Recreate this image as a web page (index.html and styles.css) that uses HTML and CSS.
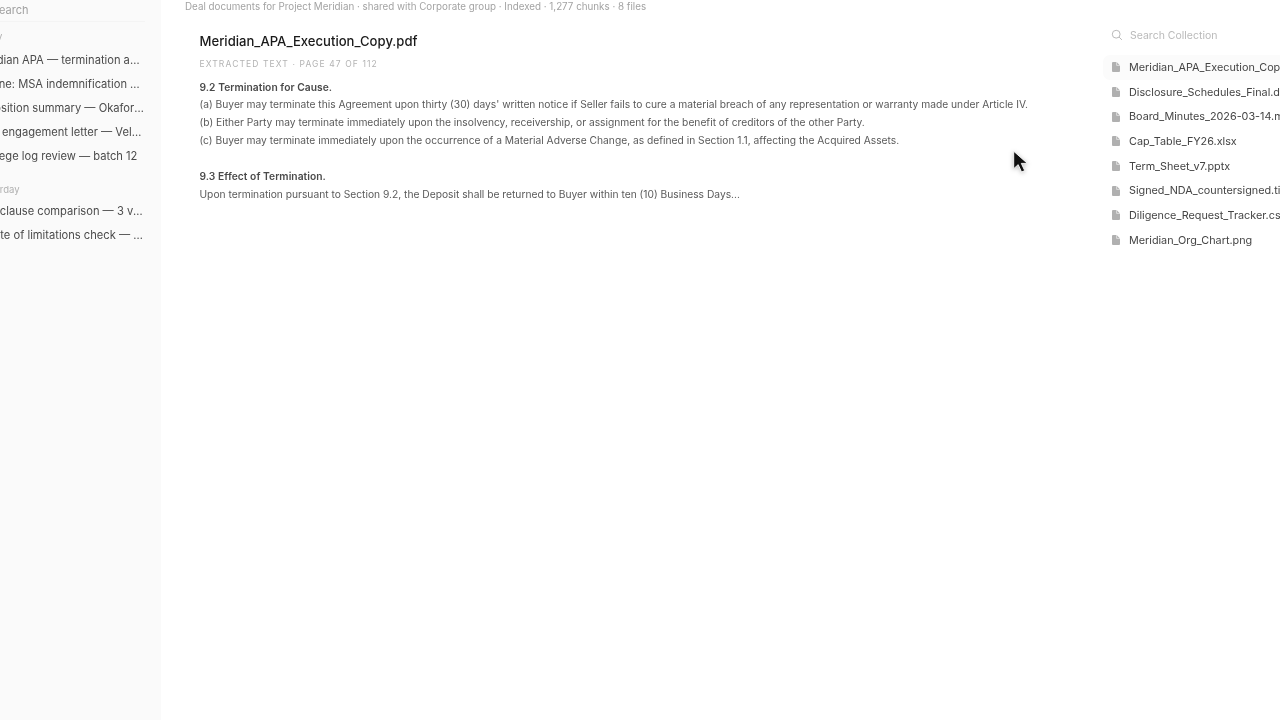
FILE: index.html
```html
<!DOCTYPE html>
<html lang="en">
<head>
<meta charset="utf-8">
<title>Meridian collection</title>
<link rel="stylesheet" href="styles.css">
</head>
<body>
<div class="app">
  <aside class="sidebar">
    <div class="side-inner">
      <div class="side-search">Search</div>
      <div class="side-group side-group-first">Today</div>
      <div class="side-item">Meridian APA — termination analysis</div>
      <div class="side-item">Redline: MSA indemnification carve-outs</div>
      <div class="side-item">Deposition summary — Okafor hearing</div>
      <div class="side-item">Draft engagement letter — Velasco matter</div>
      <div class="side-item">Privilege log review — batch 12</div>
      <div class="side-group side-group-next">Yesterday</div>
      <div class="side-item">NDA clause comparison — 3 versions here</div>
      <div class="side-item">Statute of limitations check — Delaware</div>
    </div>
  </aside>
  <main class="main">
    <p class="crumb">Deal documents for Project Meridian · shared with Corporate group · Indexed · 1,277 chunks · 8 files</p>
    <section class="doc">
      <h1 class="doc-title">Meridian_APA_Execution_Copy.pdf</h1>
      <div class="doc-meta">EXTRACTED TEXT · PAGE 47 OF 112</div>
      <div class="doc-text">
        <p class="clause-head">9.2 Termination for Cause.</p>
        <p>(a) Buyer may terminate this Agreement upon thirty (30) days' written notice if Seller fails to cure a material breach of any representation or warranty made under Article IV.</p>
        <p>(b) Either Party may terminate immediately upon the insolvency, receivership, or assignment for the benefit of creditors of the other Party.</p>
        <p>(c) Buyer may terminate immediately upon the occurrence of a Material Adverse Change, as defined in Section 1.1, affecting the Acquired Assets.</p>
        <p class="clause-head clause-gap">9.3 Effect of Termination.</p>
        <p>Upon termination pursuant to Section 9.2, the Deposit shall be returned to Buyer within ten (10) Business Days...</p>
      </div>
    </section>
  </main>
  <aside class="files">
    <div class="file-search">
      <svg class="search-icon" viewBox="0 0 12 12"><circle cx="5.2" cy="5.2" r="3.9"/><path d="M8.1 8.1l2.8 2.8"/></svg>
      <span>Search Collection</span>
    </div>
    <div class="file-row file-row-active"><svg class="file-icon" viewBox="0 0 8 10"><path d="M0 1a1 1 0 0 1 1-1h3.6L8 3.4V9a1 1 0 0 1-1 1H1a1 1 0 0 1-1-1z"/><path class="fold" d="M4.6 0v3.4H8"/></svg><span>Meridian_APA_Execution_Copy.pdf</span></div>
    <div class="file-row"><svg class="file-icon" viewBox="0 0 8 10"><path d="M0 1a1 1 0 0 1 1-1h3.6L8 3.4V9a1 1 0 0 1-1 1H1a1 1 0 0 1-1-1z"/><path class="fold" d="M4.6 0v3.4H8"/></svg><span>Disclosure_Schedules_Final.docx</span></div>
    <div class="file-row"><svg class="file-icon" viewBox="0 0 8 10"><path d="M0 1a1 1 0 0 1 1-1h3.6L8 3.4V9a1 1 0 0 1-1 1H1a1 1 0 0 1-1-1z"/><path class="fold" d="M4.6 0v3.4H8"/></svg><span>Board_Minutes_2026-03-14.md</span></div>
    <div class="file-row"><svg class="file-icon" viewBox="0 0 8 10"><path d="M0 1a1 1 0 0 1 1-1h3.6L8 3.4V9a1 1 0 0 1-1 1H1a1 1 0 0 1-1-1z"/><path class="fold" d="M4.6 0v3.4H8"/></svg><span>Cap_Table_FY26.xlsx</span></div>
    <div class="file-row"><svg class="file-icon" viewBox="0 0 8 10"><path d="M0 1a1 1 0 0 1 1-1h3.6L8 3.4V9a1 1 0 0 1-1 1H1a1 1 0 0 1-1-1z"/><path class="fold" d="M4.6 0v3.4H8"/></svg><span>Term_Sheet_v7.pptx</span></div>
    <div class="file-row"><svg class="file-icon" viewBox="0 0 8 10"><path d="M0 1a1 1 0 0 1 1-1h3.6L8 3.4V9a1 1 0 0 1-1 1H1a1 1 0 0 1-1-1z"/><path class="fold" d="M4.6 0v3.4H8"/></svg><span>Signed_NDA_countersigned.tiff</span></div>
    <div class="file-row"><svg class="file-icon" viewBox="0 0 8 10"><path d="M0 1a1 1 0 0 1 1-1h3.6L8 3.4V9a1 1 0 0 1-1 1H1a1 1 0 0 1-1-1z"/><path class="fold" d="M4.6 0v3.4H8"/></svg><span>Diligence_Request_Tracker.csv</span></div>
    <div class="file-row"><svg class="file-icon" viewBox="0 0 8 10"><path d="M0 1a1 1 0 0 1 1-1h3.6L8 3.4V9a1 1 0 0 1-1 1H1a1 1 0 0 1-1-1z"/><path class="fold" d="M4.6 0v3.4H8"/></svg><span>Meridian_Org_Chart.png</span></div>
  </aside>
  <svg class="cursor" viewBox="0 0 16 22"><path d="M1.5 1v15.5l4-3.6 3 6.6 2.8-1.3-3-6.4h5.4z"/></svg>
</div>
</body>
</html>
```

FILE: styles.css
```css
* { box-sizing: border-box; }
html, body { margin: 0; height: 100%; background: #fff; }
body { font-family: Inter, "Liberation Sans", sans-serif; overflow: hidden; }
p { margin: 0; }

.app { position: relative; display: flex; width: 1280px; height: 720px; overflow: hidden; background: #fff; filter: blur(0.3px); }

.sidebar { flex: 0 0 161px; background: #fafafa; overflow: hidden; }
.side-inner { width: 201px; margin-left: -40px; padding-right: 16px; }
.side-search { height: 22px; padding: 3px 0 0 32px; font-size: 11px; line-height: 14px; color: #a0a0a0; border-bottom: 1px solid #f4f4f4; }
.side-group { font-size: 9.5px; line-height: 12px; color: #b0b0b0; padding-left: 15px; }
.side-group-first { margin-top: 9px; height: 17px; }
.side-group-next { margin-top: 16px; height: 15px; }
.side-item { height: 24px; padding-left: 13px; font-size: 11.15px; line-height: 24px; color: #4a4a4a; white-space: nowrap; overflow: hidden; text-overflow: ellipsis; }

.main { flex: 1 1 auto; min-width: 0; padding-left: 24px; }
.crumb { height: 13px; font-size: 9.8px; line-height: 13px; color: #a3a3a3; white-space: nowrap; }
.doc { padding: 19px 0 0 14.5px; }
.doc-title { margin: 0; font-size: 13.1px; line-height: 18px; font-weight: 500; color: #1a1a1a; white-space: nowrap; }
.doc-meta { margin-top: 8px; font-size: 8.5px; line-height: 12px; letter-spacing: 0.13em; color: #b3b3b3; }
.doc-text { margin-top: 8.5px; font-size: 10.24px; line-height: 17.9px; color: #5a5a5a; white-space: nowrap; }
.clause-head { font-weight: 600; color: #4a4a4a; letter-spacing: 0.05px; }
.clause-gap { margin-top: 17.9px; }

.files { flex: 0 0 177px; min-width: 0; overflow: hidden; }
.file-search { display: flex; align-items: center; gap: 7px; height: 24px; margin: 23px 0 8px 8px; font-size: 10.5px; color: #bababa; white-space: nowrap; }
.search-icon { width: 12px; height: 12px; fill: none; stroke: #bababa; stroke-width: 1; }
.file-row { display: flex; align-items: center; gap: 9px; height: 24.7px; padding-left: 9px; font-size: 10.8px; color: #444; white-space: nowrap; border-radius: 7px 0 0 7px; }
.file-row-active { background: #fbfbfb; }
.file-icon { flex: none; width: 8px; height: 10px; fill: #b0b0b0; }
.fold { fill: none; stroke: #eee; stroke-width: 0.7; }

.cursor { position: absolute; left: 1012px; top: 150px; width: 18px; height: 25px; fill: #111; stroke: #fff; stroke-width: 0.8; filter: drop-shadow(0 1px 2px rgba(0,0,0,.25)); }
```
